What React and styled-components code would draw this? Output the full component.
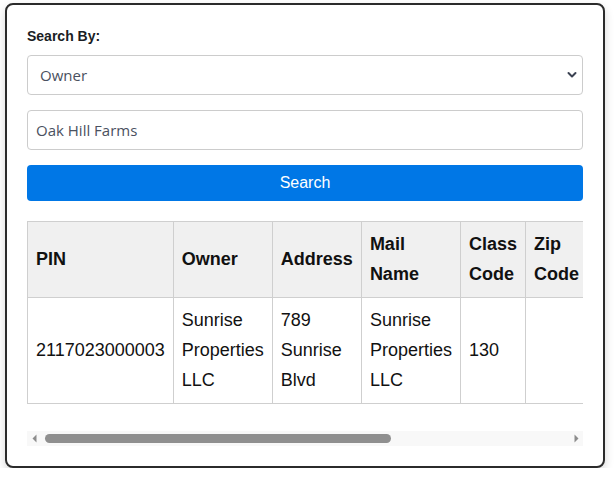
import React, { useLayoutEffect, useRef, useState } from "react";
import styled, { createGlobalStyle } from "styled-components";

const Global = createGlobalStyle`
  html, body { margin: 0; padding: 0; background: #fff; }
  body { font-family: "Liberation Sans", Arial, sans-serif; }
  * { box-sizing: border-box; }
`;

const Card = styled.div`
  margin: 3px 0 0 5px;
  width: 600px;
  border: 2px solid #2b2b2b;
  border-radius: 8px;
  background: #fff;
  padding: 21px 20px 20px;
  box-shadow: 0 4px 10px rgba(0, 0, 0, 0.16);
  display: flex;
  flex-direction: column;
`;

const Label = styled.label`
  font-family: "Liberation Sans", Arial, sans-serif;
  font-weight: 700;
  font-size: 14px;
  line-height: 20px;
  color: #1a1d24;
  margin-bottom: 9px;
`;

const Field = styled.div`
  position: relative;
  margin-bottom: 15px;
`;

const Select = styled.select`
  appearance: none;
  width: 100%;
  height: 40px;
  border: 1px solid #cccccc;
  border-radius: 4px;
  background: #fff;
  padding: 0 8px 0 12px;
  font-family: "Open Sans", "Noto Sans", sans-serif;
  font-size: 15px;
  color: #4a5160;
  outline: none;
`;

const Chevron = styled.svg`
  position: absolute;
  right: 6px;
  top: 15px;
  pointer-events: none;
`;

const Input = styled.input`
  width: 100%;
  height: 40px;
  border: 1px solid #cccccc;
  border-radius: 4px;
  padding: 0 8px;
  font-family: "Open Sans", "Noto Sans", sans-serif;
  font-size: 15px;
  color: #4a5160;
  outline: none;
`;

const Button = styled.button`
  height: 36px;
  border: none;
  border-radius: 4px;
  background: #0077e6;
  color: #fff;
  font-family: "Liberation Sans", Arial, sans-serif;
  font-size: 16px;
  margin-bottom: 20px;
  cursor: pointer;
`;

const Scroller = styled.div`
  overflow-x: auto;
  width: 100%;
  scrollbar-width: none;
  &::-webkit-scrollbar {
    display: none;
  }
`;

const Table = styled.table`
  border-collapse: collapse;
  margin-bottom: 27px;
  font-family: "Liberation Sans", Arial, sans-serif;
  font-size: 18px;
  line-height: 1.65;
  color: #111;
`;

const Th = styled.th`
  background: #f0f0f0;
  border: 1px solid #cfcfcf;
  padding: 8px;
  text-align: left;
  font-weight: 700;
  vertical-align: middle;
`;

const Td = styled.td`
  border: 1px solid #cfcfcf;
  padding: 8px;
  vertical-align: middle;
`;

const ScrollTrack = styled.div`
  display: flex;
  align-items: center;
  height: 15px;
  background: #f8f8f8;
`;

const ArrowBox = styled.div`
  width: 15px;
  height: 15px;
  flex: 0 0 15px;
  display: flex;
  align-items: center;
  justify-content: center;
`;

const Rail = styled.div`
  flex: 1;
  height: 15px;
  padding: 0 3px;
  display: flex;
  align-items: center;
`;

const Thumb = styled.div`
  height: 9px;
  border-radius: 5px;
  background: #8f8f8f;
`;

const columns = [
  "PIN",
  "Owner",
  "Address",
  "Mail Name",
  "Class Code",
  "Zip Code",
  "Acres",
  "Land Value",
  "Building Value",
  "Year",
];

const rows = [
  ["2117023000003", "Sunrise Properties LLC", "789 Sunrise Blvd", "Sunrise Properties LLC", "130", "", "", "", "", ""],
];

function Arrow({ dir }) {
  return (
    <ArrowBox>
      <svg width="8" height="9" viewBox="0 0 8 9">
        {dir === "left" ? (
          <path d="M1.5 4.5 L5.5 0.5 L5.5 8.5 Z" fill="#8c8c8c" />
        ) : (
          <path d="M6.5 4.5 L2.5 0.5 L2.5 8.5 Z" fill="#8c8c8c" />
        )}
      </svg>
    </ArrowBox>
  );
}

export default function App() {
  const scrollRef = useRef(null);
  const [ratio, setRatio] = useState(0.66);

  useLayoutEffect(() => {
    const el = scrollRef.current;
    if (el && el.scrollWidth > 0) {
      setRatio(Math.min(1, el.clientWidth / el.scrollWidth));
    }
  }, []);

  return (
    <>
      <Global />
      <Card>
        <Label htmlFor="searchBy">Search By:</Label>
        <Field>
          <Select id="searchBy" defaultValue="owner">
            <option value="owner">Owner</option>
            <option value="pin">PIN</option>
            <option value="address">Address</option>
          </Select>
          <Chevron width="10" height="10" viewBox="0 0 10 10">
            <path d="M1.5 3 L5 6.5 L8.5 3" fill="none" stroke="#3b4252" strokeWidth="2" strokeLinecap="round" strokeLinejoin="round" />
          </Chevron>
        </Field>
        <Field>
          <Input defaultValue="Oak Hill Farms" />
        </Field>
        <Button>Search</Button>
        <Scroller ref={scrollRef}>
          <Table>
            <thead>
              <tr>
                {columns.map((c) => (
                  <Th key={c}>{c}</Th>
                ))}
              </tr>
            </thead>
            <tbody>
              {rows.map((r, i) => (
                <tr key={i}>
                  {r.map((v, j) => (
                    <Td key={j}>{v}</Td>
                  ))}
                </tr>
              ))}
            </tbody>
          </Table>
        </Scroller>
        <ScrollTrack>
          <Arrow dir="left" />
          <Rail>
            <Thumb style={{ width: `${ratio * 100}%` }} />
          </Rail>
          <Arrow dir="right" />
        </ScrollTrack>
      </Card>
    </>
  );
}
